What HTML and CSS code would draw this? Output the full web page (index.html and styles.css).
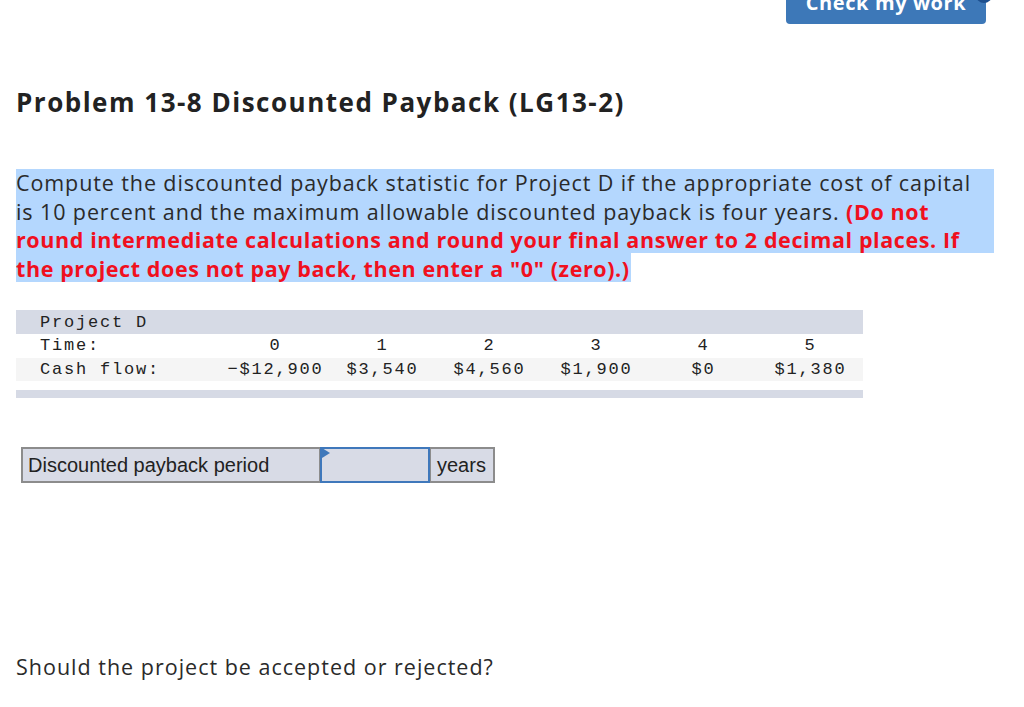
FILE: index.html
```html
<!DOCTYPE html>
<html>
<head>
<meta charset="utf-8">
<link rel="stylesheet" href="styles.css">
</head>
<body>
<div class="page">
  <div class="topbar">
    <div class="check-wrap">
      <button class="check-btn">Check my work</button>
      <span class="badge"></span>
    </div>
  </div>
  <h1 class="title">Problem 13-8 Discounted Payback (LG13-2)</h1>
  <p class="prompt">Compute the discounted payback statistic for Project D if the appropriate cost of capital is 10 percent and the maximum allowable discounted payback is four years. <strong class="warn">(Do not round intermediate calculations and round your final answer to 2 decimal places. If the project does not pay back, then enter a "0" (zero).)</strong></p>

  <div class="data">
    <div class="row head"><span class="lbl">Project D</span></div>
    <div class="row"><span class="lbl">Time:</span><span class="c">0</span><span class="c">1</span><span class="c">2</span><span class="c">3</span><span class="c">4</span><span class="c">5</span></div>
    <div class="row alt"><span class="lbl">Cash flow:</span><span class="c">&minus;$12,900</span><span class="c">$3,540</span><span class="c">$4,560</span><span class="c">$1,900</span><span class="c">$0</span><span class="c">$1,380</span></div>
    <div class="foot"></div>
  </div>

  <div class="answer">
    <div class="a-lbl">Discounted payback period</div>
    <div class="a-input"><span class="tri"></span></div>
    <div class="a-unit">years</div>
  </div>

  <p class="question">Should the project be accepted or rejected?</p>
</div>
</body>
</html>
```
FILE: styles.css
```css
html, body { margin: 0; padding: 0; background: #fff; }
body { font-family: "Open Sans", "Lato", sans-serif; color: #2b2b2b; }
.page { padding: 0 16px; width: 992px; }
.topbar { height: 25px; display: flex; justify-content: flex-end; }
.check-wrap { position: relative; margin-right: 22px; }
.check-btn {
  width: 200px; height: 40px; margin-top: -16px;
  background: #3d78b8; color: #fff; border: none; border-radius: 4px;
  font-family: "Open Sans", sans-serif; font-weight: 700; font-size: 20px; letter-spacing: 0.6px;
  display: flex; align-items: flex-start; justify-content: center;
  padding-top: 9px; line-height: 20px;
}
.badge { position: absolute; right: -6px; top: -12px; width: 16px; height: 15px; border-radius: 50%; background: #1d4f8e; }
.title { margin: 61px 0 0; font-size: 26px; font-weight: 700; color: #222; line-height: 32px; letter-spacing: 1.5px; }
.prompt {
  margin: 51px 0 0; width: 972px; padding-right: 6px; font-size: 21.5px; line-height: 28.5px; color: #2a2a2a; letter-spacing: 0.9px;
  background:
    linear-gradient(#b4d7fe, #b4d7fe) 0 0 / 100% 84px no-repeat,
    linear-gradient(#b4d7fe, #b4d7fe) 0 84px / 615px 29px no-repeat;
}
.warn { color: #f0101e; font-weight: 700; letter-spacing: 0.6px; }
.data { margin-top: 27px; width: 847px; font-family: "Liberation Mono", monospace; font-size: 17px; letter-spacing: 1.8px; color: #222; }
.row { display: flex; height: 23.5px; align-items: center; }
.row.head { background: #d6dae5; height: 24px; }
.row.alt { background: #f5f5f5; }
.lbl { width: 205px; padding-left: 24px; box-sizing: border-box; flex: none; }
.c { width: 107px; text-align: center; flex: none; padding-left: 1.8px; box-sizing: border-box; }
.foot { margin-top: 9px; height: 8px; background: #d6dae5; }
.answer {
  margin: 49px 0 0 5px; display: flex; width: 474px; height: 36px;
  font-family: "Liberation Sans", Arial, sans-serif; font-size: 20px; color: #222;
}
.a-lbl { width: 299px; box-sizing: border-box; border: 2px solid #8c8c8c; border-right: 1px solid #8c8c8c; background: #d8dbe6; padding-left: 5px; display: flex; align-items: center; }
.a-input { position: relative; width: 110px; box-sizing: border-box; border: 2px solid #3f78bb; background: #d8dbe6; }
.tri { position: absolute; left: 0; top: 0; width: 0; height: 0; border-top: 5px solid transparent; border-bottom: 5px solid transparent; border-left: 8px solid #3f78bb; transform: translateY(-1px); }
.a-unit { flex: 1; box-sizing: border-box; border: 2px solid #8c8c8c; border-left: 1px solid #8c8c8c; background: #d8dbe6; padding-left: 6px; display: flex; align-items: center; }
.question { margin: 170px 0 0; font-size: 21.5px; line-height: 28px; color: #2a2a2a; letter-spacing: 1px; }
```
